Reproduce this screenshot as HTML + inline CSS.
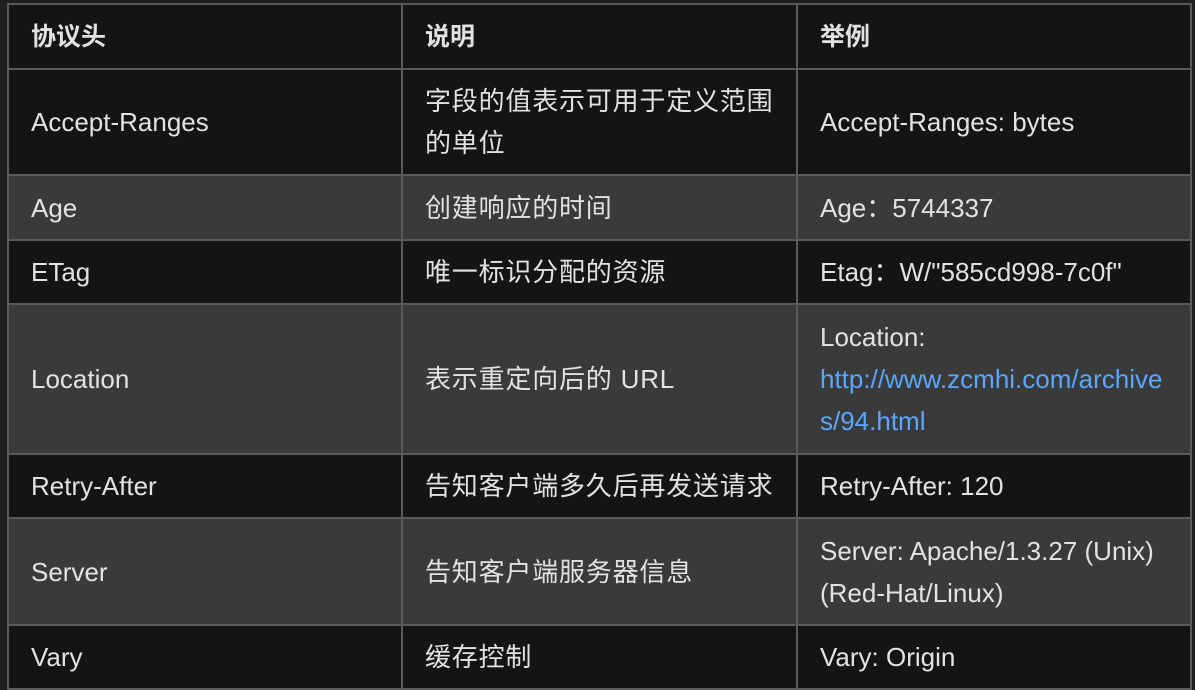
<!DOCTYPE html>
<html><head><meta charset="utf-8"><style>
html,body{margin:0;padding:0;background:#1e1e1e;width:1195px;height:689px;overflow:hidden}
table{position:absolute;left:7px;top:3px;border-collapse:collapse;table-layout:fixed;width:1183px;font-family:"Liberation Sans","Noto Sans CJK SC",sans-serif;font-size:26px;color:#e2e2e2}
td,th{border:2px solid #5a5a5a;padding:0 0 0 22px;text-align:left;vertical-align:middle;line-height:42px;white-space:nowrap}
th{font-weight:bold;font-size:25px}
.c{letter-spacing:0.8px}
tr{background:#141414}
tr.a{background:#3a3a3a}
a{color:#5aa7ff;text-decoration:none}
</style></head><body>
<table>
<colgroup><col style="width:394px"><col style="width:395px"><col style="width:394px"></colgroup>
<tr style="height:65px"><th>协议头</th><th>说明</th><th>举例</th></tr>
<tr style="height:106px"><td>Accept-Ranges</td><td class="c">字段的值表示可用于定义范围<br>的单位</td><td>Accept-Ranges: bytes</td></tr>
<tr class="a" style="height:65px"><td>Age</td><td class="c">创建响应的时间</td><td>Age：5744337</td></tr>
<tr style="height:64px"><td>ETag</td><td class="c">唯一标识分配的资源</td><td>Etag：W/"585cd998-7c0f"</td></tr>
<tr class="a" style="height:150px"><td>Location</td><td class="c">表示重定向后的 URL</td><td>Location:<br><a>http://www.zcmhi.com/archive<br>s/94.html</a></td></tr>
<tr style="height:64px"><td>Retry-After</td><td class="c">告知客户端多久后再发送请求</td><td>Retry-After: 120</td></tr>
<tr class="a" style="height:107px"><td>Server</td><td class="c">告知客户端服务器信息</td><td>Server: Apache/1.3.27 (Unix)<br>(Red-Hat/Linux)</td></tr>
<tr style="height:64px"><td>Vary</td><td class="c">缓存控制</td><td>Vary: Origin</td></tr>
</table>
</body></html>
